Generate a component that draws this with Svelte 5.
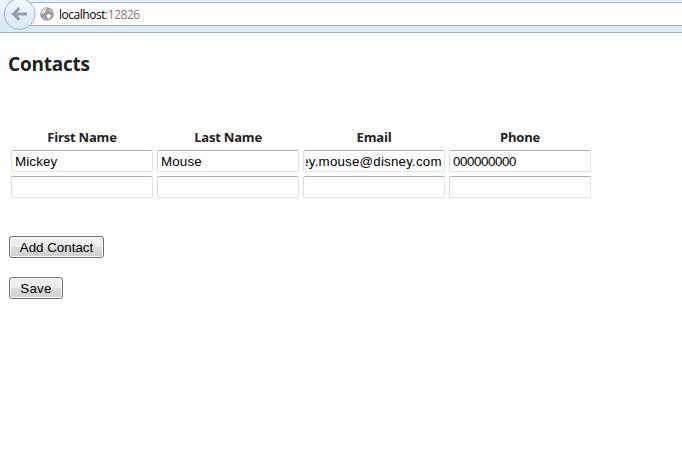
<script>
  const columns = [
    { label: 'First Name', tracking: 0.15 },
    { label: 'Last Name', tracking: 0.15 },
    { label: 'Email', tracking: 0.2 },
    { label: 'Phone', tracking: -0.42 }
  ];
  let rows = $state([
    ['Mickey', 'Mouse', 'mickey.mouse@disney.com', '000000000'],
    ['', '', '', '']
  ]);

  function showEnd(node) {
    node.scrollLeft = node.scrollWidth;
  }
</script>

<div class="window">
  <header>
    <div class="address">
      <svg class="globe" width="14" height="14" viewBox="0 0 14 14">
        <circle cx="7" cy="7" r="6.8" fill="#999" />
        <path d="M1.5 3.7 4 1.2 7 1.1 5.8 3 6.8 4.2 4.8 5.3 4.4 7.2 2.2 6.4 1.3 7.5Z" fill="#dedede" />
        <path d="M8.2 2.3 10.5 2.2 12.6 5.3 11 5.5 9.5 4.5Z" fill="#c5c5c5" />
        <path d="M6.2 8 8.7 6.8 11.2 8.1 10.5 10.4 8.2 12.6 7.4 10.5Z" fill="#f0f0f0" />
        <path d="M2.2 9.3 4.3 9.8 5 12.4Z" fill="#bcbcbc" />
      </svg>
      <span class="url"><b>localhost</b>:12826</span>
    </div>
    <svg class="back" width="38" height="33" viewBox="0 0 38 33">
      <defs>
        <linearGradient id="disc" x1="0" y1="0" x2="0" y2="1">
          <stop offset="0" stop-color="#f2f7fc" />
          <stop offset="1" stop-color="#d9e7f5" />
        </linearGradient>
      </defs>
      <circle cx="19.7" cy="14" r="15.4" fill="url(#disc)" stroke="#a5b5c3" />
      <path d="M19.2 8.2 13.5 14 19.2 19.8M14 14H27" fill="none" stroke="#929fac" stroke-width="3" />
    </svg>
  </header>

  <main>
    <h2>Contacts</h2>
    <table>
      <thead>
        <tr>
          {#each columns as column}
            <th>{column.label}</th>
          {/each}
        </tr>
      </thead>
      <tbody>
        {#each rows as row}
          <tr>
            {#each row as value, i}
              <td>
                <input
                  type="text"
                  {value}
                  style:letter-spacing="{columns[i].tracking}px"
                  {@attach showEnd}
                />
              </td>
            {/each}
          </tr>
        {/each}
      </tbody>
    </table>
    <div class="actions">
      <button class="add">Add Contact</button>
      <button class="save">Save</button>
    </div>
  </main>
</div>

<style>
  .window {
    height: 468px;
    background: #fff;
    overflow: hidden;
  }
  header {
    position: relative;
    box-sizing: border-box;
    height: 33px;
    padding-top: 2px;
    background: linear-gradient(#e9f2fb 0, #e9f2fb 4px, #d8e8f7 27px, #dceaf8);
    border-bottom: 1px solid #a2b3c2;
  }
  .address {
    box-sizing: border-box;
    display: flex;
    align-items: center;
    gap: 5px;
    height: 24px;
    margin-left: 20px;
    padding-left: 20px;
    background: #fff;
    border-top: 1px solid #a5b8c8;
    border-bottom: 1px solid #9fb2c3;
  }
  .back {
    position: absolute;
    left: 0;
    top: 0;
  }
  .url {
    font: 12px/16px "Open Sans", "Noto Sans", sans-serif;
    letter-spacing: -0.47px;
    color: #7b7b7b;
    padding-top: 1px;
  }
  .url b {
    font-weight: 400;
    color: #000;
  }
  main {
    padding: 19px 8px 0;
  }
  h2 {
    margin: 0;
    font: 700 19px/24px "Open Sans", "Noto Sans", sans-serif;
    letter-spacing: -0.22px;
    color: #222;
  }
  table {
    margin-top: 48px;
    border-spacing: 2px;
  }
  th {
    padding: 1px 1px 0;
    height: 20px;
    font: 700 13px/20px "Open Sans", "Noto Sans", sans-serif;
    letter-spacing: -0.2px;
    color: #222;
  }
  td {
    padding: 1px;
  }
  input {
    display: block;
    box-sizing: border-box;
    width: 142px;
    height: 22px;
    margin: 0;
    padding: 1px 2px;
    text-indent: 1px;
    border: 1px solid #dfe1e5;
    border-top-color: #abadb3;
    border-left-color: #d8dbe0;
    border-radius: 2px;
    outline: 0;
    background: #fff;
    color: #000;
    font: 13.33px "Liberation Sans", Arial, sans-serif;
  }
  .actions {
    display: flex;
    flex-direction: column;
    align-items: flex-start;
    gap: 19px;
    margin: 35px 0 0 1px;
  }
  button {
    box-sizing: border-box;
    height: 22px;
    padding: 0;
    border: 1px solid #707070;
    border-radius: 3px;
    background: linear-gradient(#f2f2f2, #ebebeb 50%, #ddd 50%, #cfcfcf);
    box-shadow: inset 0 0 0 1px #f8f8f8;
    color: #000;
    font: 13.33px "Liberation Sans", Arial, sans-serif;
  }
  .add {
    width: 95px;
  }
  .save {
    width: 54px;
    letter-spacing: 0.25px;
  }
</style>
